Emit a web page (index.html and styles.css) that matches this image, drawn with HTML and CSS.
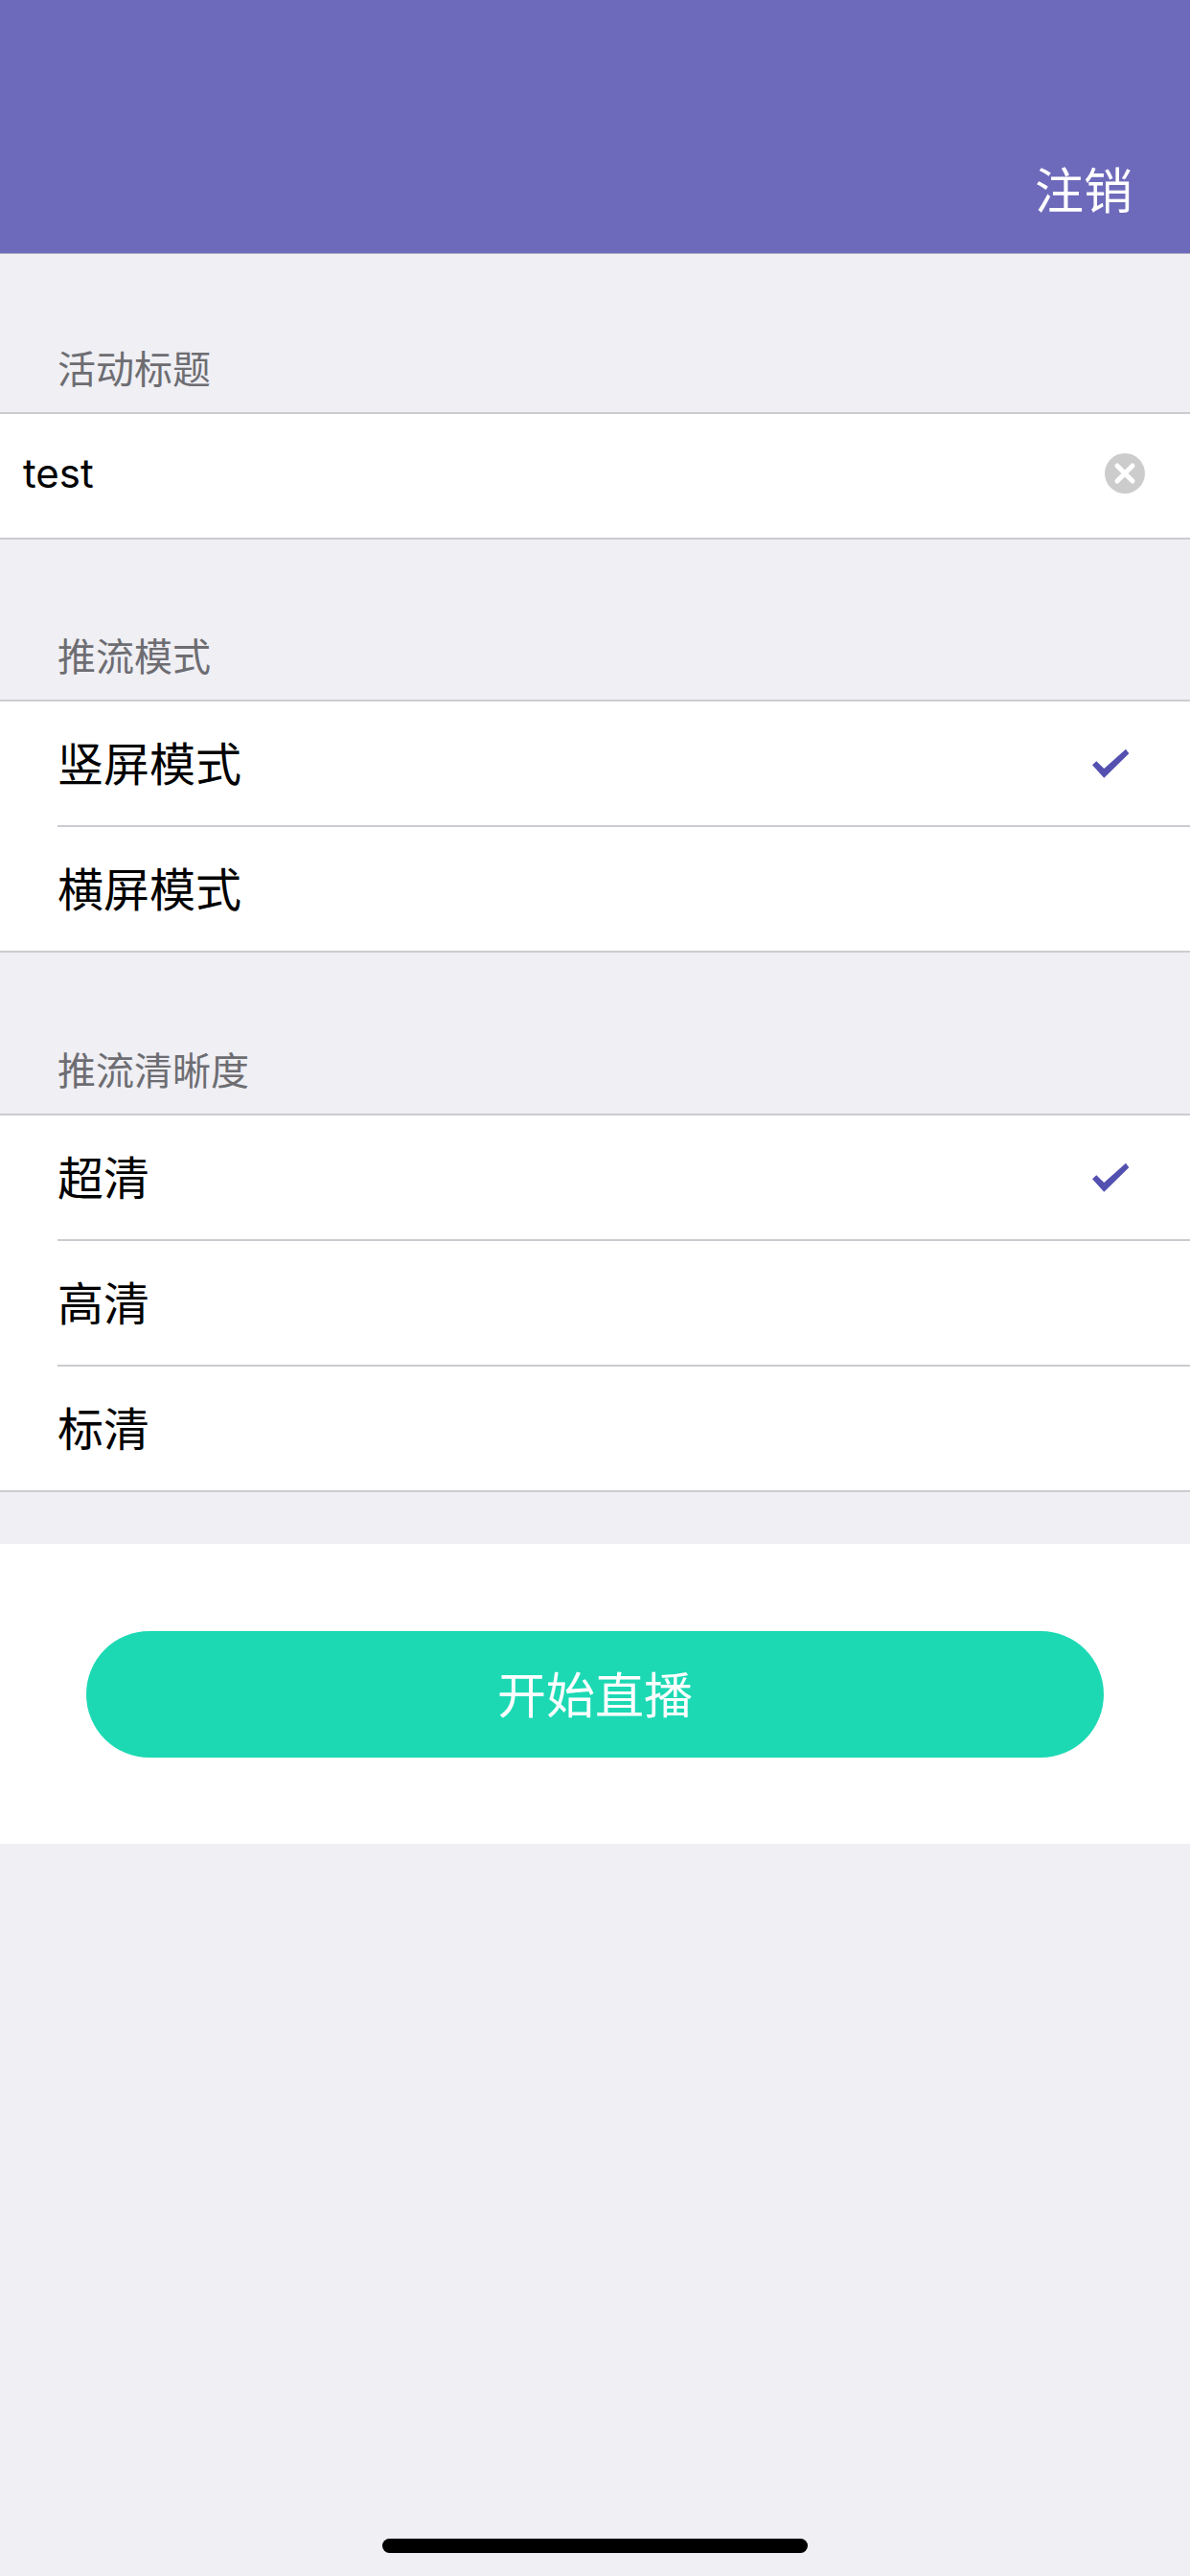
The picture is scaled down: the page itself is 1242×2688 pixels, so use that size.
FILE: index.html
```html
<!DOCTYPE html>
<html lang="zh-CN">
<head>
<meta charset="utf-8">
<title>开始直播</title>
<link rel="stylesheet" href="styles.css">
</head>
<body>
<div class="page">
  <header class="topbar"><button class="logout">注销</button></header>

  <section class="section">
    <h2 class="section-label">活动标题</h2>
    <div class="group">
      <div class="field">
        <span class="field-value">test</span>
        <svg class="clear-icon" viewBox="0 0 42 42" aria-hidden="true">
          <circle cx="21" cy="21" r="21" fill="#cccccc"/>
          <path d="M13 13 L29 29 M29 13 L13 29" stroke="#ffffff" stroke-width="5" stroke-linecap="round" fill="none"/>
        </svg>
      </div>
    </div>
  </section>

  <section class="section">
    <h2 class="section-label">推流模式</h2>
    <div class="group">
      <div class="row">
        <span class="row-text">竖屏模式</span>
        <svg class="check-icon" viewBox="0 0 40 32" aria-hidden="true"><path d="M0 17.3 L4.3 13.3 L12.3 21 L35 .7 L38.3 5.3 L12.3 30.7 Z" fill="#5450b0"/></svg>
      </div>
      <div class="row"><span class="row-text">横屏模式</span></div>
    </div>
  </section>

  <section class="section">
    <h2 class="section-label">推流清晰度</h2>
    <div class="group">
      <div class="row">
        <span class="row-text">超清</span>
        <svg class="check-icon" viewBox="0 0 40 32" aria-hidden="true"><path d="M0 17.3 L4.3 13.3 L12.3 21 L35 .7 L38.3 5.3 L12.3 30.7 Z" fill="#5450b0"/></svg>
      </div>
      <div class="row"><span class="row-text">高清</span></div>
      <div class="row"><span class="row-text">标清</span></div>
    </div>
  </section>

  <div class="action-panel"><button class="start-btn">开始直播</button></div>

  <div class="home-bar"></div>
</div>
</body>
</html>
```
FILE: styles.css
```css
* { box-sizing: border-box; }
html, body { margin: 0; padding: 0; }
body {
  width: 1242px;
  height: 2688px;
  background: #efeff4;
  font-family: "Noto Sans CJK SC", "Inter", sans-serif;
  overflow: hidden;
}
.page {
  display: flex;
  flex-direction: column;
  width: 1242px;
  height: 2688px;
}
.topbar {
  display: flex;
  justify-content: flex-end;
  align-items: flex-end;
  height: 265px;
  padding: 0 60px 32px 0;
  background: #6e6abb;
  border-bottom: 1px solid #a9a8b8;
}
.logout {
  padding: 0;
  border: 0;
  background: none;
  color: #ffffff;
  font: 400 51px/72px "Noto Sans CJK SC", sans-serif;
}
.section-label {
  display: flex;
  align-items: flex-end;
  height: 73px;
  margin: 92px 0 0;
  padding: 0 0 19px 60px;
  color: #6d6d72;
  font-size: 40px;
  font-weight: 400;
  line-height: 56px;
}
.section + .section .section-label { margin-top: 94px; }
.section:nth-of-type(3) .section-label { margin-top: 95px; }
.group {
  background: #ffffff;
  border-top: 2px solid #cccbd0;
  border-bottom: 2px solid #cccbd0;
}
.field {
  display: flex;
  align-items: center;
  justify-content: space-between;
  height: 129px;
  padding: 0 47px 5px 24px;
}
.field-value {
  color: #000000;
  font: 400 42px/60px "Inter", sans-serif;
}
.clear-icon { width: 42px; height: 42px; }
.row {
  display: flex;
  align-items: center;
  justify-content: space-between;
  height: 129px;
  margin-left: 60px;
  padding-right: 62px;
}
.row + .row { border-top: 2px solid #cccbd0; height: 131px; }
.row-text {
  padding-bottom: 6px;
  color: #000000;
  font-size: 48px;
  line-height: 68px;
}
.check-icon { width: 40px; height: 32px; }
.action-panel {
  display: flex;
  justify-content: center;
  margin-top: 54px;
  padding: 91px 0 90px;
  background: #ffffff;
}
.start-btn {
  width: 1062px;
  height: 132px;
  padding: 0 0 5px;
  border: 0;
  border-radius: 66px;
  background: #1cd9b4;
  color: #ffffff;
  font: 400 51px/72px "Noto Sans CJK SC", sans-serif;
}
.home-bar {
  align-self: center;
  width: 444px;
  height: 15px;
  margin-top: auto;
  margin-bottom: 24px;
  border-radius: 8px;
  background: #000000;
}
```
